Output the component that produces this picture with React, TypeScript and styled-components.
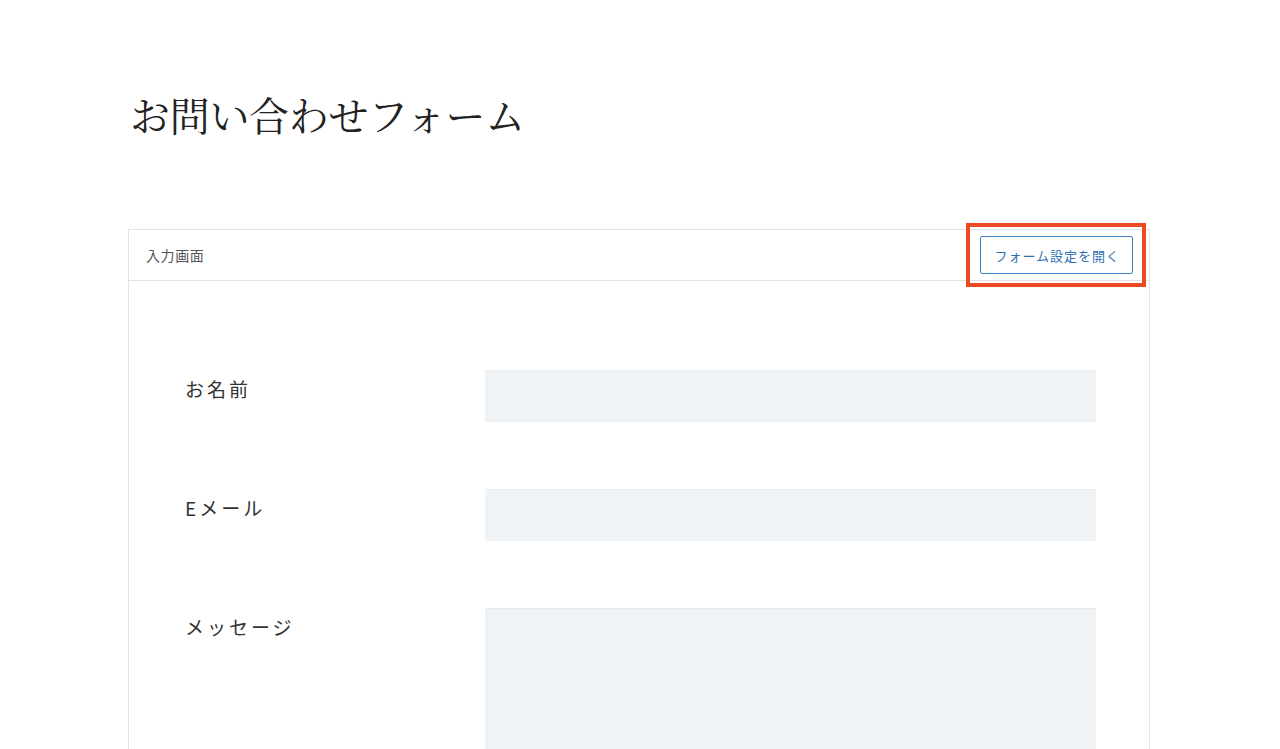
import styled, { createGlobalStyle } from "styled-components";

const GlobalStyle = createGlobalStyle`
  html, body {
    margin: 0;
    padding: 0;
    background: #ffffff;
    font-family: "Noto Sans CJK JP", "Noto Sans", sans-serif;
    color: #333;
  }
`;

const Page = styled.main`
  padding: 87px 130px 0 128px;
  height: 749px;
  box-sizing: border-box;
  overflow: hidden;
`;

const Title = styled.h1`
  margin: 0 0 88px 2px;
  font-family: "Noto Serif CJK JP", "Noto Sans CJK JP", serif;
  font-weight: 400;
  font-size: 40px;
  line-height: 54px;
  letter-spacing: -0.3px;
  color: #222;
`;

const Card = styled.section`
  width: 1022px;
  border: 1px solid #e2e2e2;
  border-bottom: none;
  box-sizing: border-box;
`;

const CardHeader = styled.header`
  display: flex;
  justify-content: space-between;
  align-items: center;
  height: 50px;
  padding: 0 16px 0 17px;
  border-bottom: 1px solid #e2e2e2;
`;

const HeaderLabel = styled.span`
  font-size: 14px;
  letter-spacing: 0.6px;
  color: #555;
`;

const Highlight = styled.div`
  position: relative;
  display: flex;
`;

const Marker = styled.span`
  position: absolute;
  left: -14px;
  top: -13px;
  right: -13px;
  bottom: -13px;
  border: 4px solid #ea4a24;
  pointer-events: none;
`;

const SettingsButton = styled.button`
  height: 38px;
  padding: 0 12px 0 13px;
  background: #fff;
  border: 1px solid #3b7fc4;
  border-radius: 2px;
  color: #2f6fb2;
  font-family: inherit;
  font-size: 13px;
  letter-spacing: 1px;
  cursor: pointer;
`;

const FormBody = styled.div`
  display: flex;
  flex-direction: column;
  gap: 67px;
  padding: 89px 53px 0 56px;
`;

const Row = styled.div`
  display: grid;
  grid-template-columns: 300px 1fr;
  align-items: start;
`;

const Label = styled.label`
  padding-top: 6px;
  font-size: 19px;
  line-height: 26px;
  letter-spacing: 3px;
  color: #333;
`;

const Field = styled.div<{ $tall?: boolean }>`
  height: ${(p) => (p.$tall ? "200px" : "52px")};
  background: #f0f3f6;
  border-top: 1px solid #e8ecf0;
  box-sizing: border-box;
`;

const fields = [
  { label: "お名前" },
  { label: "Eメール" },
  { label: "メッセージ", tall: true },
];

export default function App() {
  return (
    <>
      <GlobalStyle />
      <Page>
        <Title>お問い合わせフォーム</Title>
        <Card>
          <CardHeader>
            <HeaderLabel>入力画面</HeaderLabel>
            <Highlight>
              <SettingsButton>フォーム設定を開く</SettingsButton>
              <Marker />
            </Highlight>
          </CardHeader>
          <FormBody>
            {fields.map((f) => (
              <Row key={f.label}>
                <Label>{f.label}</Label>
                <Field $tall={f.tall} />
              </Row>
            ))}
          </FormBody>
        </Card>
      </Page>
    </>
  );
}
